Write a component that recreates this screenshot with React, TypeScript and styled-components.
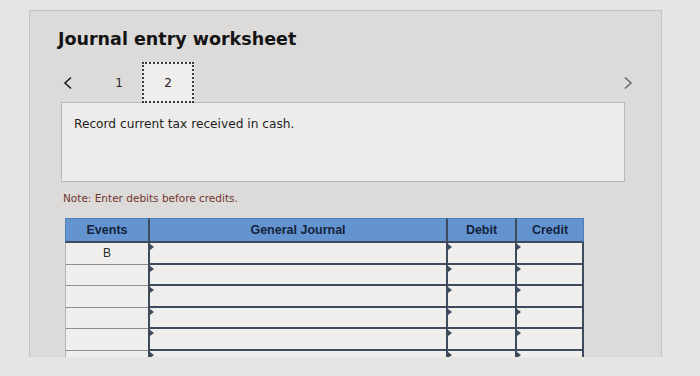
import React from "react";
import styled, { createGlobalStyle } from "styled-components";

const GlobalStyle = createGlobalStyle`
  html, body {
    margin: 0;
    padding: 0;
    background: #e6e5e3;
  }
  body {
    font-family: "DejaVu Sans", Verdana, sans-serif;
    color: #1c1c1c;
  }
`;

const Page = styled.div`
  width: 700px;
  height: 376px;
  overflow: hidden;
  padding: 10px 0 0 29px;
  box-sizing: border-box;
`;

const Panel = styled.div`
  width: 633px;
  height: 347px;
  box-sizing: border-box;
  background: #dcdbd9;
  border: 1px solid #c4c3c1;
  border-bottom: none;
  overflow: hidden;
`;

const Title = styled.h1`
  margin: 17px 0 0 28px;
  font-size: 17.5px;
  line-height: 22px;
  font-weight: bold;
  color: #141414;
`;

const NavRow = styled.div`
  display: flex;
  align-items: center;
  height: 41px;
  margin: 12px 27px 0 31px;
`;

const Arrow = styled.button<{ $end?: boolean }>`
  display: flex;
  align-items: center;
  justify-content: ${(p) => (p.$end ? "flex-end" : "flex-start")};
  width: 35px;
  height: 41px;
  padding: 0 0 0 ${(p) => (p.$end ? "0" : "1px")};
  border: none;
  background: none;
  color: #2a2a2a;
`;

const Tab = styled.div<{ $active?: boolean }>`
  display: flex;
  align-items: center;
  justify-content: center;
  width: ${(p) => (p.$active ? "52px" : "46px")};
  height: 41px;
  box-sizing: border-box;
  font-size: 12px;
  color: #222;
  position: relative;
  z-index: 1;
  background: ${(p) => (p.$active ? "#efeeec" : "transparent")};
  border: ${(p) => (p.$active ? "2px dotted #3a3a3a" : "2px solid transparent")};
`;

const Spacer = styled.div`
  flex: 1;
`;

const Description = styled.div`
  width: 564px;
  height: 80px;
  box-sizing: border-box;
  margin: -1px 0 0 31px;
  padding: 14px 12px;
  background: #edecea;
  border: 1px solid #b9b8b6;
  font-size: 12.2px;
  color: #1e1e1e;
`;

const Note = styled.p`
  margin: 10px 0 0 33px;
  font-size: 10.5px;
  line-height: 12px;
  color: #723530;
`;

const Table = styled.div`
  display: grid;
  grid-template-columns: 83px 298px 69px 69px;
  width: 519px;
  margin: 14px 0 0 35px;
  background: #efeeec;
`;

const HeadCell = styled.div<{ $first?: boolean; $last?: boolean }>`
  height: 25px;
  display: flex;
  align-items: center;
  justify-content: center;
  box-sizing: border-box;
  background: #6394d0;
  border-top: 1px solid #4e7fbd;
  border-left: ${(p) => (p.$first ? "1px solid #4e7fbd" : "2px solid #3d4a5c")};
  border-right: ${(p) => (p.$last ? "1px solid #4e7fbd" : "none")};
  border-bottom: 2px solid #3d4a5c;
  font-family: "Liberation Sans", Arial, sans-serif;
  font-weight: bold;
  font-size: 12.5px;
  color: #14233c;
`;

const EventCell = styled.div`
  height: 21.6px;
  display: flex;
  align-items: center;
  justify-content: center;
  box-sizing: border-box;
  border-left: 1px solid #b5b4b2;
  border-bottom: 1px solid #8f8e8c;
  font-family: "Liberation Sans", Arial, sans-serif;
  font-size: 12px;
  color: #2a2a2a;
`;

const InputCell = styled.div<{ $last?: boolean }>`
  position: relative;
  height: 21.6px;
  box-sizing: border-box;
  border-left: 2px solid #3d4a5c;
  border-right: ${(p) => (p.$last ? "2px solid #3d4a5c" : "none")};
  border-bottom: 2.5px solid #3d4a5c;

  &::before {
    content: "";
    position: absolute;
    left: 0;
    top: 1px;
    border-top: 3px solid transparent;
    border-bottom: 3px solid transparent;
    border-left: 4px solid #3d4a5c;
  }
`;

const Chevron = ({ dir }: { dir: "left" | "right" }) => (
  <svg width="12" height="14" viewBox="0 0 12 14">
    <polyline
      points={dir === "left" ? "9,1.5 3,7 9,12.5" : "3,1.5 9,7 3,12.5"}
      fill="none"
      stroke={dir === "left" ? "#1f1f1f" : "#6a6a6a"}
      strokeWidth="1.6"
    />
  </svg>
);

const rows = ["B", "", "", "", "", ""];

const App: React.FC = () => {
  return (
    <Page>
      <GlobalStyle />
      <Panel>
        <Title>Journal entry worksheet</Title>

        <NavRow>
          <Arrow>
            <Chevron dir="left" />
          </Arrow>
          <Tab>1</Tab>
          <Tab $active>2</Tab>
          <Spacer />
          <Arrow $end>
            <Chevron dir="right" />
          </Arrow>
        </NavRow>

        <Description>Record current tax received in cash.</Description>

        <Note>Note: Enter debits before credits.</Note>

        <Table>
          <HeadCell $first>Events</HeadCell>
          <HeadCell>General Journal</HeadCell>
          <HeadCell>Debit</HeadCell>
          <HeadCell $last>Credit</HeadCell>
          {rows.map((ev, i) => (
            <React.Fragment key={i}>
              <EventCell>{ev}</EventCell>
              <InputCell />
              <InputCell />
              <InputCell $last />
            </React.Fragment>
          ))}
        </Table>
      </Panel>
    </Page>
  );
};

export default App;
